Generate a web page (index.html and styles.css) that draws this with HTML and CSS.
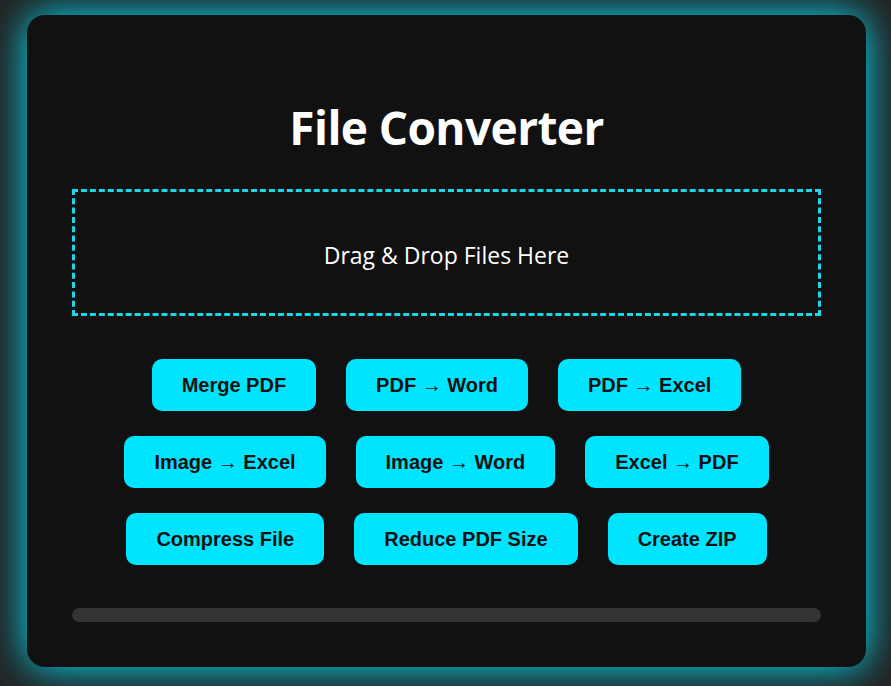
FILE: index.html
```html
<!DOCTYPE html>
<html lang="en">
<head>
<meta charset="utf-8">
<title>File Converter</title>
<link rel="stylesheet" href="styles.css">
</head>
<body>
  <main class="card">
    <h1 class="title">File Converter</h1>
    <div class="dropzone">Drag &amp; Drop Files Here</div>
    <div class="actions">
      <div class="row">
        <button class="btn">Merge PDF</button>
        <button class="btn">PDF → Word</button>
        <button class="btn">PDF → Excel</button>
      </div>
      <div class="row">
        <button class="btn">Image → Excel</button>
        <button class="btn">Image → Word</button>
        <button class="btn">Excel → PDF</button>
      </div>
      <div class="row">
        <button class="btn">Compress File</button>
        <button class="btn">Reduce PDF Size</button>
        <button class="btn">Create ZIP</button>
      </div>
    </div>
    <div class="progress"><div class="progress-fill"></div></div>
  </main>
</body>
</html>
```
FILE: styles.css
```css
html, body {
  margin: 0;
  padding: 0;
}
body {
  background: #222222;
  padding: 15px 0 19px 2px;
  font-family: "Open Sans", "Noto Sans", sans-serif;
}
.card {
  box-sizing: border-box;
  width: 839px;
  height: 652px;
  margin: 0 auto;
  background: #111111;
  border-radius: 18px;
  box-shadow: 0 0 40px #00e5ff;
  padding: 85px 45px 0;
  display: flex;
  flex-direction: column;
}
.title {
  margin: 0 0 34px;
  color: #ffffff;
  font-size: 46px;
  line-height: 55px;
  letter-spacing: -0.6px;
  font-weight: 700;
  text-align: center;
}
.dropzone {
  box-sizing: border-box;
  height: 127px;
  border: 3px dashed #1ad6e8;
  display: flex;
  align-items: center;
  justify-content: center;
  color: #ffffff;
  font-size: 23px;
  padding-top: 4px;
}
.actions {
  margin-top: 43px;
  display: flex;
  flex-direction: column;
  gap: 25px;
}
.row {
  display: flex;
  justify-content: center;
  gap: 30px;
}
.btn {
  border: none;
  border-radius: 10px;
  background: #00e5ff;
  color: #111111;
  font-family: "Liberation Sans", Arial, sans-serif;
  font-weight: 700;
  font-size: 20px;
  line-height: 23px;
  padding: 15px 30px 14px;
  height: 52px;
  cursor: pointer;
}
.progress {
  margin-top: 43px;
  height: 14px;
  border-radius: 7px;
  background: #333333;
  overflow: hidden;
}
.progress-fill {
  width: 0;
  height: 100%;
  background: #00e5ff;
}
```
